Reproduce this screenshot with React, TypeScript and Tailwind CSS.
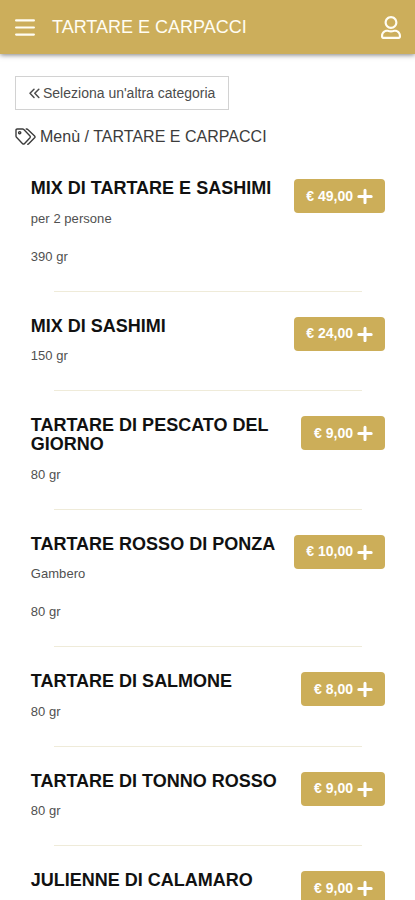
import React from "react";
import { FaRegUser } from "react-icons/fa";

type Dish = { name: string; lines: string[]; price: string };

const dishes: Dish[] = [
  { name: "MIX DI TARTARE E SASHIMI", lines: ["per 2 persone", "390 gr"], price: "49,00" },
  { name: "MIX DI SASHIMI", lines: ["150 gr"], price: "24,00" },
  { name: "TARTARE DI PESCATO DEL GIORNO", lines: ["80 gr"], price: "9,00" },
  { name: "TARTARE ROSSO DI PONZA", lines: ["Gambero", "80 gr"], price: "10,00" },
  { name: "TARTARE DI SALMONE", lines: ["80 gr"], price: "8,00" },
  { name: "TARTARE DI TONNO ROSSO", lines: ["80 gr"], price: "9,00" },
  { name: "JULIENNE DI CALAMARO", lines: [], price: "9,00" },
];

function MenuIcon() {
  return (
    <svg width="20" height="18" viewBox="0 0 20 18" stroke="currentColor" strokeWidth="2.2" strokeLinecap="round">
      <path d="M1.1 2.400h17.800M1.100 9.500h17.800M1.100 16.600h17.800" />
    </svg>
  );
}

function BackIcon() {
  return (
    <svg width="11" height="11" viewBox="0 0 11 11" fill="none" stroke="currentColor" strokeWidth="1.5" strokeLinecap="round" strokeLinejoin="round">
      <path d="M5 1.2L1 5.3l4 4.1M9.8 1.2l-4 4.1 4 4.1" />
    </svg>
  );
}

function TagsIcon() {
  return (
    <svg width="21" height="18" viewBox="0 0 21 18" fill="none" stroke="currentColor" strokeWidth="1.4" strokeLinejoin="round" strokeLinecap="round">
      <path d="M1 2.200Q1 1 2.200 1H7.600q.7 0 1.200.5l6.200 6.400q.8.9 0 1.800l-5.600 6q-.9.8-1.800 0L1.500 9.300Q1 8.800 1 8.100z" />
      <path d="M11.200 1h.4q.7 0 1.200.5l6.800 6.500q.8.9 0 1.800l-5.900 6q-.4.400-.9.500" />
      <circle cx="4.700" cy="4.700" r="1.100" />
    </svg>
  );
}

function PlusIcon() {
  return (
    <svg width="16" height="16" viewBox="0 0 16 16" stroke="currentColor" strokeWidth="3" strokeLinecap="round">
      <path d="M8 2.300v12.400M1.800 8.500h12.400" />
    </svg>
  );
}

function DishRow({ dish }: { dish: Dish }) {
  return (
    <article className="flex flex-col pb-[25px]">
      <div className="flex items-start justify-between">
        <div className="w-[255px] pl-[0.8px]">
          <h2 className="text-[18px] leading-[19px] font-bold text-[#111]">{dish.name}</h2>
          <div className="flex flex-col gap-[19px] pt-[10.200px]">
            {dish.lines.map((line) => (
              <p key={line} className="text-[13px] leading-[19.200px] tracking-[0.05px] text-[#505050]">{line}</p>
            ))}
          </div>
        </div>
        <button className="flex h-[34px] shrink-0 items-center gap-[3.500px] rounded-[4px] bg-[#ccae59] pr-[12.500px] pl-[12.600px] text-[14px] font-bold whitespace-nowrap text-white">
          <span>€ {dish.price}</span>
          <PlusIcon />
        </button>
      </div>
      <hr className="mr-[23px] ml-[24px] mt-[25px] h-px border-0 bg-[#efebd9]" />
    </article>
  );
}

export default function App() {
  return (
    <div className="h-[900px] w-full overflow-hidden bg-white font-['Liberation_Sans',Arial,sans-serif]">
      <header className="flex h-[54px] items-center bg-[#ccae5b] pr-[14px] pl-[15px] text-[#fffdf3] shadow-[0_1px_5px_rgba(0,0,0,0.5)]">
        <MenuIcon />
        <h1 className="ml-[17px] flex-1 text-[18px] leading-[20px]">TARTARE E CARPACCI</h1>
        <FaRegUser className="mt-px h-[23px] w-5" />
      </header>
      <main className="px-[15px] pt-[22px]">
        <button className="flex h-[34px] w-[214px] items-center gap-[3px] border border-[#d2d2d2] pl-[13px] text-[14px] whitespace-nowrap text-[#4c4c4c]">
          <BackIcon />
          <span>Seleziona un'altra categoria</span>
        </button>
        <nav className="mt-[17px] flex h-5 items-center gap-1 text-[16px] text-[#3c3c3c]">
          <TagsIcon />
          <span className="tracking-[0.02px]">Menù / TARTARE E CARPACCI</span>
        </nav>
        <section className="mt-[32.400px] flex flex-col px-[15px]">
          {dishes.map((dish) => (
            <DishRow key={dish.name} dish={dish} />
          ))}
        </section>
      </main>
    </div>
  );
}
